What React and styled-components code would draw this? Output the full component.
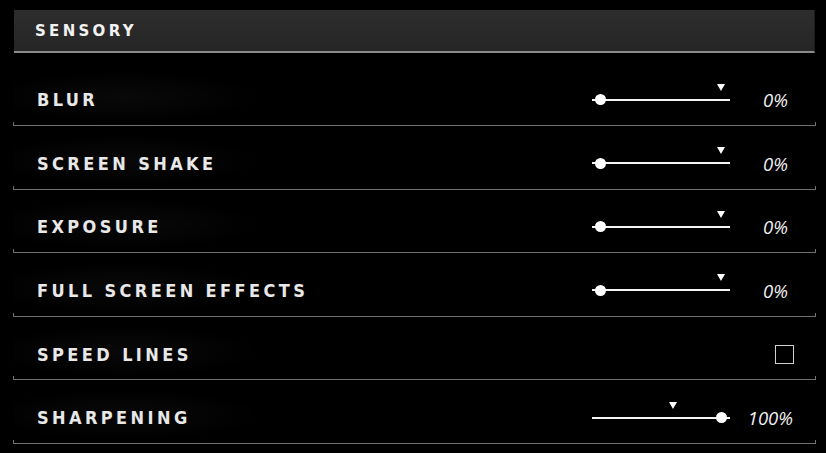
import React from "react";
import styled, { createGlobalStyle } from "styled-components";

const Global = createGlobalStyle`
  html, body { margin: 0; padding: 0; background: #000; }
  body { width: 826px; height: 453px; overflow: hidden; }
`;

const Panel = styled.div`
  padding: 10px 10px 0 13px;
  font-family: "DejaVu Sans", "Liberation Sans", sans-serif;
  color: #ececec;
`;

const Header = styled.div`
  margin-left: 1px;
  width: 801px;
  height: 43px;
  box-sizing: border-box;
  display: flex;
  align-items: center;
  padding-left: 21px;
  background: linear-gradient(180deg, #2d2d2d 0%, #262626 100%);
  border-right: 1px solid #1a1a1a;
  border-bottom: 2px solid #8a8a8a;
`;

const HeaderTitle = styled.span`
  font-size: 15px;
  font-weight: bold;
  letter-spacing: 3.3px;
  color: #f2f2f2;
`;

const List = styled.div`
  margin-top: 9.4px;
  width: 803px;
`;

const Row = styled.div`
  position: relative;
  height: 63.6px;
  box-sizing: border-box;
  padding-top: 12px;
  display: flex;
  align-items: center;
  border-bottom: 1px solid #707070;
  background: radial-gradient(ellipse 140px 26px at 110px 55%, rgba(255,255,255,0.035), transparent);
  &::before, &::after {
    content: "";
    position: absolute;
    bottom: -1px;
    width: 1px;
    height: 4px;
    background: #707070;
  }
  &::before { left: 0; }
  &::after { right: 0; }
`;

const Label = styled.span`
  flex: 1;
  padding-left: 24px;
  font-family: "DejaVu Sans Condensed", "DejaVu Sans", sans-serif;
  font-size: 18px;
  font-weight: bold;
  letter-spacing: 3.4px;
  color: #e8e8e8;
`;

const Control = styled.div`
  display: flex;
  align-items: center;
  padding-right: ${(p) => p.$pad}px;
`;

const Track = styled.div`
  position: relative;
  width: 138px;
  height: 2px;
  background: #f4f4f4;
`;

const Knob = styled.div`
  position: absolute;
  top: 50%;
  width: 11px;
  height: 11px;
  margin-left: -5.5px;
  margin-top: -5.5px;
  border-radius: 50%;
  background: #fff;
`;

const Marker = styled.div`
  position: absolute;
  top: -15px;
  margin-left: -4px;
  width: 0;
  height: 0;
  border-left: 4px solid transparent;
  border-right: 4px solid transparent;
  border-top: 7px solid #fff;
`;

const Value = styled.span`
  width: ${(p) => p.$w}px;
  text-align: right;
  font-family: "Open Sans", "DejaVu Sans", sans-serif;
  font-style: italic;
  font-weight: 400;
  font-size: 18.5px;
  color: #f0f0f0;
`;

const Check = styled.div`
  width: 19px;
  height: 19px;
  box-sizing: border-box;
  border: 1.5px solid #cfcfcf;
`;

function Slider({ value, marker, pad, w }) {
  const pos = (v) => 8.7 + (v / 100) * 120.3;
  return (
    <Control $pad={pad}>
      <Track>
        <Marker style={{ left: pos(marker) }} />
        <Knob style={{ left: pos(value) }} />
      </Track>
      <Value $w={w}>{value}%</Value>
    </Control>
  );
}

const rows = [
  { label: "BLUR", type: "slider", value: 0, marker: 100, pad: 28, w: 58 },
  { label: "SCREEN SHAKE", type: "slider", value: 0, marker: 100, pad: 28, w: 58 },
  { label: "EXPOSURE", type: "slider", value: 0, marker: 100, pad: 28, w: 58 },
  { label: "FULL SCREEN EFFECTS", type: "slider", value: 0, marker: 100, pad: 28, w: 58 },
  { label: "SPEED LINES", type: "check" },
  { label: "SHARPENING", type: "slider", value: 100, marker: 60, pad: 23, w: 63 },
];

export default function App() {
  return (
    <>
      <Global />
      <Panel>
        <Header>
          <HeaderTitle>SENSORY</HeaderTitle>
        </Header>
        <List>
          {rows.map((r) => (
            <Row key={r.label}>
              <Label>{r.label}</Label>
              {r.type === "slider" ? (
                <Slider value={r.value} marker={r.marker} pad={r.pad} w={r.w} />
              ) : (
                <Control $pad={22}>
                  <Check />
                </Control>
              )}
            </Row>
          ))}
        </List>
      </Panel>
    </>
  );
}
